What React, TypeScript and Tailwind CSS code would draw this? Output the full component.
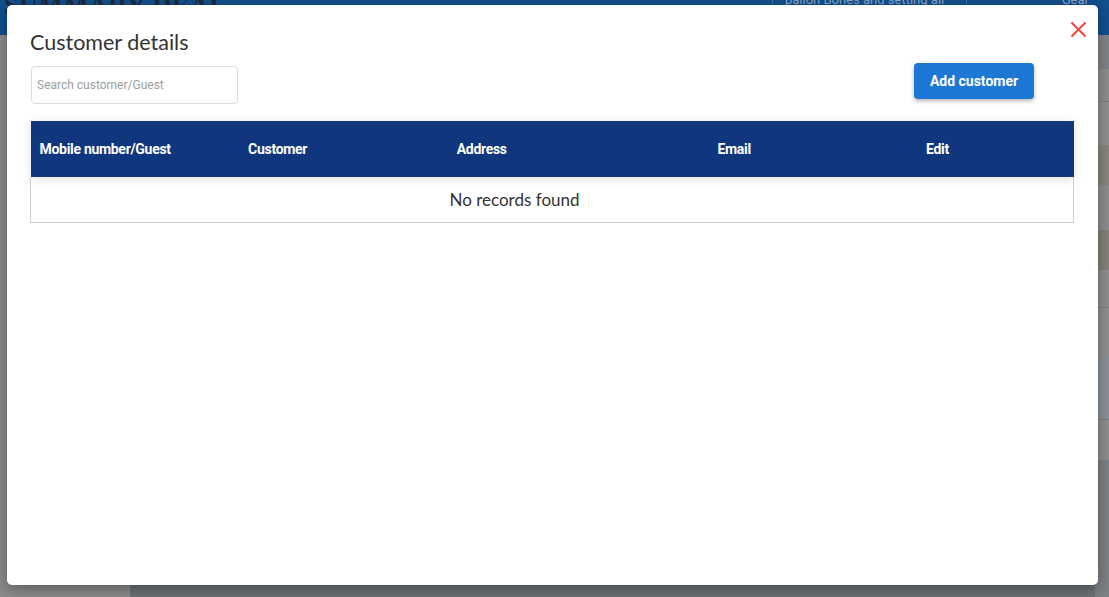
import React from "react";

const columns = [
  { label: "Mobile number/Guest", width: "w-[20%]" },
  { label: "Customer", width: "w-[20%]" },
  { label: "Address", width: "w-[25%]" },
  { label: "Email", width: "w-[20%]" },
  { label: "Edit", width: "w-[15%]" },
];

const sideRows = [
  "h-[34px] bg-[#7f8387]",
  "h-[33px] bg-[#8c8c8c] border-b border-[#7a7a7a]",
  "h-[43px] bg-[#8f8f8f]",
  "h-[40px] bg-[#86847c]",
  "h-[45px] bg-[#8c8c8c]",
  "h-[40px] bg-[#838079]",
  "h-[38px] bg-[#8d8d8d] border-b border-[#7d7d7d]",
  "h-[47px] bg-[#8e8e8e]",
  "h-[65px] bg-[#8a9096] border-b border-[#7d7d7d]",
  "h-[40px] bg-[#8d8d8d]",
];

function Backdrop() {
  return (
    <div className="flex h-[597px] w-full flex-col overflow-hidden bg-[#8e8e8e]">
      <div className="flex h-[35px] shrink-0 items-start bg-[#124f8d]">
        <span className="-mt-[14px] pl-1 font-['Liberation_Serif',serif] text-[26px] font-bold tracking-wide text-[#1d2a3a]">
          SUMMARY DEAL
        </span>
        <div className="ml-auto flex h-full">
          <div className="-mt-[10px] w-[195px] border-x border-[#3d6f9f] px-3 font-['Roboto',sans-serif] text-[13px] text-[#8aa6c4]">
            pallon Bones and setting all
          </div>
          <div className="-mt-[10px] w-[142px] pr-5 text-right font-['Roboto',sans-serif] text-[13px] text-[#8aa6c4]">
            Gear
          </div>
        </div>
      </div>
      <div className="flex flex-1">
        <div className="w-[130px] bg-[#8b8b8b]" />
        <div className="flex-1 bg-[#6d7074]" />
        <div className="flex w-[14px] flex-col bg-[#7c8185]">
          {sideRows.map((c, i) => (
            <div key={i} className={c} />
          ))}
        </div>
      </div>
    </div>
  );
}

export default function App() {
  return (
    <div className="relative h-[597px] w-[1109px] overflow-hidden">
      <Backdrop />

      <div className="absolute left-[7px] top-[5px] h-[580px] w-[1091px] rounded-[5px] bg-white shadow-[0_4px_14px_rgba(0,0,0,0.35)]">
        <button className="absolute right-[7px] top-[12px] p-1 text-[#f44336]">
          <svg width="17" height="17" viewBox="0 0 17 17" fill="none">
            <path d="M1.5 1.5l14 14M15.5 1.5l-14 14" stroke="currentColor" strokeWidth="1.9" />
          </svg>
        </button>

        <div className="flex flex-col px-[23px] pt-[26px]">
          <h2 className="font-['Lato',sans-serif] text-[21.5px] leading-[22px] text-[#333]">
            Customer details
          </h2>

          <div className="mt-[12px] flex items-start justify-between pr-[41px]">
            <input
              placeholder="Search customer/Guest"
              className="ml-[1px] mt-[1px] h-[38px] w-[207px] rounded-[4px] border border-[#dcdcdc] px-[5px] font-['Roboto',sans-serif] text-[12px] text-[#333] outline-none placeholder:text-[#9e9e9e]"
            />
            <button className="mt-[-2px] h-[36px] w-[120px] rounded-[4px] bg-[#1c78d4] font-['Roboto',sans-serif] text-[14px] font-bold text-white shadow-[0_2px_4px_rgba(0,0,0,0.3)]">
              Add customer
            </button>
          </div>

          <table className="mt-[17px] w-[1044px] table-fixed border-collapse">
            <thead>
              <tr className="h-[56px] bg-[#10367d] shadow-[0_2px_10px_rgba(0,0,0,0.12)]">
                {columns.map((c) => (
                  <th
                    key={c.label}
                    className={`${c.width} px-[9px] text-left font-['Roboto',sans-serif] text-[14px] font-bold tracking-[-0.3px] text-white`}
                  >
                    {c.label}
                  </th>
                ))}
              </tr>
            </thead>
            <tbody>
              <tr className="h-[45px]">
                <td
                  colSpan={5}
                  className="border border-t-0 border-[#cfcfcf] pr-[75px] text-center font-['Lato',sans-serif] text-[17px] text-[#333]"
                >
                  No records found
                </td>
              </tr>
            </tbody>
          </table>
        </div>
      </div>
    </div>
  );
}
